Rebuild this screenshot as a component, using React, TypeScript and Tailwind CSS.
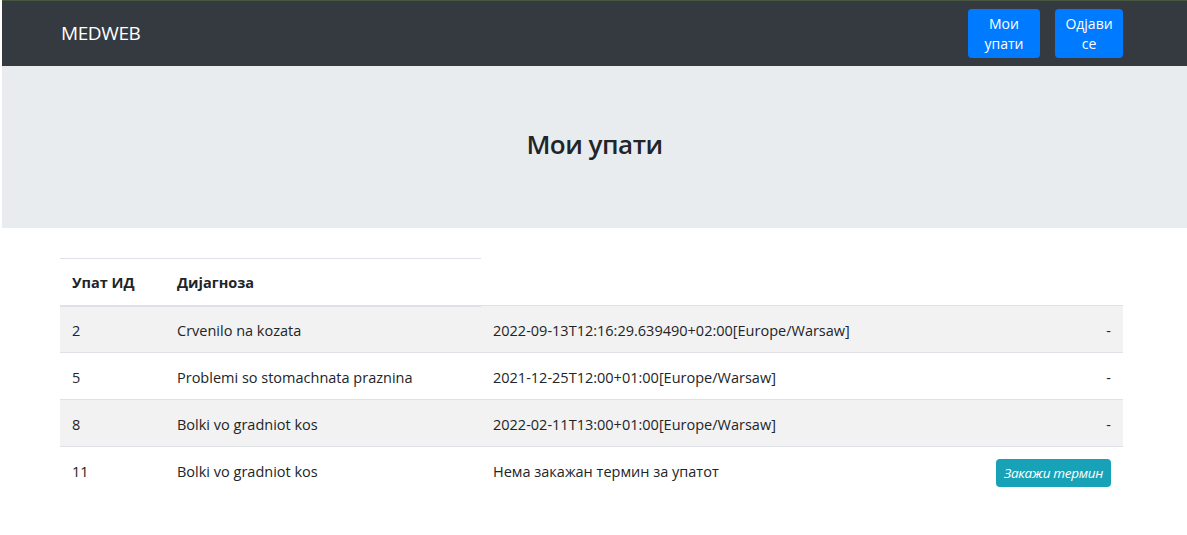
import React from 'react';

interface Referral {
    id: number;
    diagnosis: string;
    term: string | null;
}

const referrals: Referral[] = [
    { id: 2, diagnosis: 'Crvenilo na kozata', term: '2022-09-13T12:16:29.639490+02:00[Europe/Warsaw]' },
    { id: 5, diagnosis: 'Problemi so stomachnata praznina', term: '2021-12-25T12:00+01:00[Europe/Warsaw]' },
    { id: 8, diagnosis: 'Bolki vo gradniot kos', term: '2022-02-11T13:00+01:00[Europe/Warsaw]' },
    { id: 11, diagnosis: 'Bolki vo gradniot kos', term: null },
];

export default function App() {
    return (
        <div className="min-h-[535px] bg-white pl-[2px] text-[#212529] font-['Open_Sans',sans-serif]">
            <nav className="h-[66px] bg-[#343a40] border-t border-[#46563f] flex items-center justify-between pl-[59px] pr-[64px]">
                <span className="text-white text-[19px] tracking-[-0.4px]">MEDWEB</span>
                <div className="flex items-center gap-[15px]">
                    <button className="w-[72px] h-[49px] rounded bg-[#007bff] text-white text-[14px] leading-[20px] px-[10px] text-center">
                        Мои упати
                    </button>
                    <button className="w-[68px] h-[49px] rounded bg-[#007bff] text-white text-[14px] leading-[20px] px-[10px] text-center">
                        Одјави се
                    </button>
                </div>
            </nav>

            <div className="h-[162px] bg-[#e9ecef] flex items-center justify-center pb-[6px]">
                <h3 className="text-[26px] font-semibold tracking-[-0.5px]">Мои упати</h3>
            </div>

            <div className="pt-[30px] pl-[58px] pr-[64px]">
                <table className="w-full border-collapse text-[14.5px] table-fixed">
                    <colgroup>
                        <col className="w-[105px]" />
                        <col className="w-[316px]" />
                        <col className="w-[482px]" />
                        <col />
                    </colgroup>
                    <thead>
                        <tr>
                            <th className="text-left font-bold px-3 pt-[2px] h-[47px] border-t border-[#dee2e6] border-b-2">Упат ИД</th>
                            <th className="text-left font-bold px-3 pt-[2px] h-[47px] border-t border-[#dee2e6] border-b-2">Дијагноза</th>
                            <th></th>
                            <th></th>
                        </tr>
                    </thead>
                    <tbody>
                        {referrals.map((r, i) => (
                            <tr key={r.id} className={i % 2 === 0 ? 'bg-[#f2f2f2]' : 'bg-white'}>
                                <td className="px-3 pt-[3px] h-[47px] border-t border-[#dee2e6]">{r.id}</td>
                                <td className="px-3 pt-[3px] h-[47px] border-t border-[#dee2e6]">{r.diagnosis}</td>
                                <td className="px-3 pt-[3px] h-[47px] border-t border-[#dee2e6] whitespace-nowrap">
                                    {r.term ?? 'Нема закажан термин за упатот'}
                                </td>
                                <td className="px-3 pt-[3px] h-[47px] border-t border-[#dee2e6] text-right">
                                    {r.term ? (
                                        '-'
                                    ) : (
                                        <button className="rounded bg-[#17a2b8] text-white italic text-[13.5px] leading-[20px] px-2 h-[28px] mt-[2px] tracking-[-0.3px]">
                                            Закажи термин
                                        </button>
                                    )}
                                </td>
                            </tr>
                        ))}
                    </tbody>
                </table>
            </div>
        </div>
    );
}
